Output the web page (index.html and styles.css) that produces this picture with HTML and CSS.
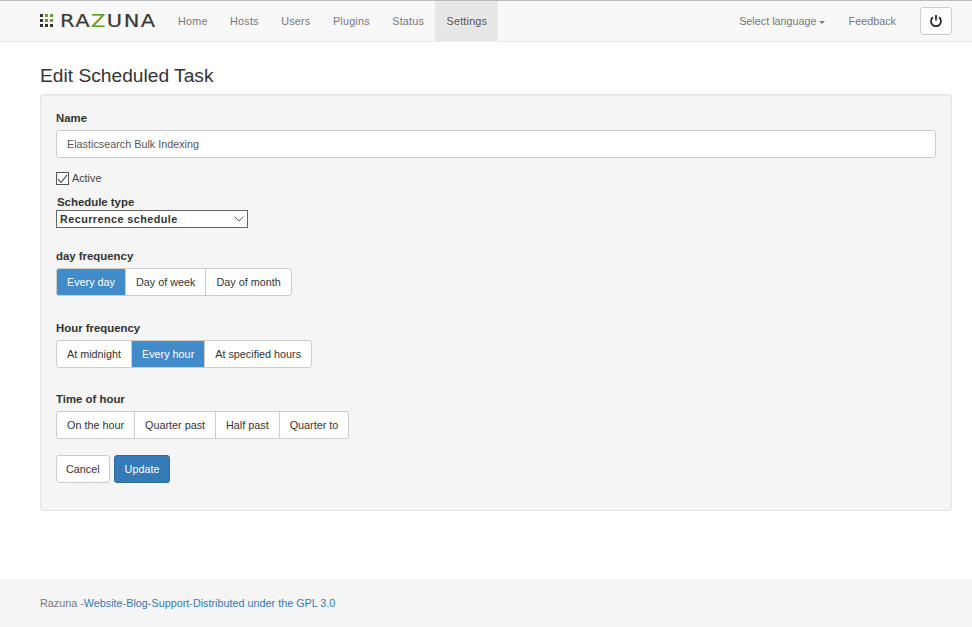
FILE: index.html
```html
<!DOCTYPE html>
<html lang="en">
<head>
    <meta charset="UTF-8">
    <title>Edit Scheduled Task</title>
    <link rel="stylesheet" href="styles.css">
</head>
<body>
    <nav class="navbar">
        <a class="brand" href="#">
            <svg class="brand-mark" width="13" height="14" viewBox="0 0 13 14">
                <g fill="#333">
                    <rect x="0" y="0" width="3" height="3"/><rect x="0" y="5" width="3" height="3"/><rect x="0" y="10" width="3" height="3"/>
                    <rect x="5" y="10" width="3" height="3"/><rect x="10" y="10" width="3" height="3"/>
                </g>
                <g fill="#6a9a2c">
                    <rect x="5" y="0" width="3" height="3"/><rect x="10" y="0" width="3" height="3"/><rect x="5" y="5" width="3" height="3"/><rect x="10" y="5" width="3" height="3"/>
                </g>
            </svg>
            <span class="brand-name">RA<span class="brand-z">Z</span>UNA</span>
        </a>
        <ul class="nav nav-main">
            <li><a href="#">Home</a></li>
            <li><a href="#">Hosts</a></li>
            <li><a href="#">Users</a></li>
            <li><a href="#">Plugins</a></li>
            <li><a href="#">Status</a></li>
            <li class="active"><a href="#">Settings</a></li>
        </ul>
        <ul class="nav nav-right">
            <li><a href="#">Select language<span class="caret"></span></a></li>
            <li><a href="#">Feedback</a></li>
        </ul>
        <button class="power" type="button">
            <svg width="14" height="14" viewBox="0 0 14 14" fill="none" stroke="#222" stroke-width="1.7">
                <path d="M4 3.2a5 5 0 1 0 6 0"/>
                <path d="M7 1v5.5"/>
            </svg>
        </button>
    </nav>

    <main class="container">
        <h1>Edit Scheduled Task</h1>
        <form class="well">
            <label class="field-label" for="taskName">Name</label>
            <input class="form-control" id="taskName" type="text" value="Elasticsearch Bulk Indexing">

            <div class="active-row">
                <span class="check">
                    <svg width="11" height="10" viewBox="0 0 11 10" fill="none" stroke="#333" stroke-width="1.1"><path d="M1 5l3 3.5L10 1"/></svg>
                </span>
                <span>Active</span>
            </div>

            <div class="schedule-label">Schedule type</div>
            <div class="select">
                <span>Recurrence schedule</span>
                <svg width="10" height="6" viewBox="0 0 10 6" fill="none" stroke="#555" stroke-width="1"><path d="M0.5 0.5l4.5 4.5l4.5-4.5"/></svg>
            </div>

            <div class="group-label first">day frequency</div>
            <div class="btn-group">
                <a class="btn on">Every day</a>
                <a class="btn">Day of week</a>
                <a class="btn">Day of month</a>
            </div>

            <div class="group-label">Hour frequency</div>
            <div class="btn-group">
                <a class="btn">At midnight</a>
                <a class="btn on">Every hour</a>
                <a class="btn">At specified hours</a>
            </div>

            <div class="group-label third">Time of hour</div>
            <div class="btn-group">
                <a class="btn">On the hour</a>
                <a class="btn">Quarter past</a>
                <a class="btn">Half past</a>
                <a class="btn">Quarter to</a>
            </div>

            <div class="actions">
                <button class="btn-single" type="button">Cancel</button>
                <button class="btn-single primary" type="button">Update</button>
            </div>
        </form>
    </main>

    <footer class="footer">
        Razuna -<a href="#">Website</a>-<a href="#">Blog</a>-<a href="#">Support</a>-<a href="#">Distributed under the GPL 3.0</a>
    </footer>
</body>
</html>
```

FILE: styles.css
```css
* {
    box-sizing: border-box;
}

body {
    margin: 0;
    font-family: "Liberation Sans", Arial, sans-serif;
    font-size: 10.8px;
    line-height: 15px;
    color: #333;
    background-color: #fff;
}

a {
    color: #337ab7;
    text-decoration: none;
}

.navbar {
    display: flex;
    align-items: center;
    height: 42px;
    padding-left: 40px;
    padding-right: 20px;
    background-color: #f8f8f8;
    border-top: 1px solid #bbb;
    border-bottom: 1px solid #e7e7e7;
}

.brand {
    display: flex;
    align-items: center;
    gap: 7px;
    width: 126.75px;
}

.brand-name {
    font-family: "DejaVu Sans", sans-serif;
    font-size: 17.5px;
    letter-spacing: 1.2px;
    color: #3a3a3a;
    -webkit-text-stroke: 0.2px #3a3a3a;
    transform: scaleX(1.2);
    transform-origin: left center;
}

.brand-z {
    color: #5fa02c;
    -webkit-text-stroke: 0.2px #5fa02c;
}

.nav {
    display: flex;
    margin: 0;
    padding: 0;
    list-style: none;
    height: 100%;
}

.nav a {
    display: block;
    height: 100%;
    padding: 13px 11px;
    color: #777;
}

.nav-main a {
    padding: 13px 11.25px;
    letter-spacing: 0.2px;
}

.nav .active a {
    color: #555;
    background-color: #e7e7e7;
}

.nav-right {
    margin-left: auto;
    margin-right: 13px;
}

.nav-right li + li a {
    padding-left: 13px;
}

.caret {
    display: inline-block;
    margin-left: 2px;
    vertical-align: middle;
    border-top: 3px solid #777;
    border-left: 3px solid transparent;
    border-right: 3px solid transparent;
}

.power {
    display: flex;
    align-items: center;
    justify-content: center;
    width: 32px;
    height: 28px;
    padding: 0;
    background-color: #fff;
    border: 1px solid #ccc;
    border-radius: 3px;
}

.container {
    padding: 0 20px 0 40px;
}

h1 {
    margin: 24px 0 8px;
    font-size: 19.2px;
    font-weight: 400;
    line-height: 20px;
}

.well {
    height: 417px;
    padding: 16px 15px 15px;
    background-color: #f5f5f5;
    border: 1px solid #e3e3e3;
    border-radius: 3px;
    box-shadow: inset 0 1px 1px rgba(0,0,0,.05);
}

.field-label, .schedule-label, .group-label {
    display: block;
    font-weight: 700;
    font-size: 11.4px;
}

.form-control {
    display: block;
    width: 100%;
    height: 28px;
    margin-top: 4px;
    padding: 0 10px;
    font: inherit;
    color: #555;
    background-color: #fff;
    border: 1px solid #ccc;
    border-radius: 3px;
}

.active-row {
    display: flex;
    align-items: center;
    gap: 3px;
    margin-top: 13px;
    color: #444;
}

.check {
    display: flex;
    align-items: center;
    justify-content: center;
    width: 13px;
    height: 13px;
    background-color: #fff;
    border: 1px solid #555;
}

.schedule-label {
    margin-top: 9px;
    padding-left: 1px;
}

.select {
    display: flex;
    align-items: center;
    justify-content: space-between;
    width: 192px;
    height: 18px;
    padding: 0 3px;
    font-weight: 700;
    letter-spacing: 0.45px;
    background-color: #fff;
    border: 1px solid #666;
}

.group-label {
    margin-top: 25px;
    margin-bottom: 4px;
}

.group-label.first {
    margin-top: 21px;
}

.group-label.third {
    margin-top: 24px;
}

.btn-group {
    display: flex;
}

.btn {
    height: 28px;
    padding: 6px 10px;
    color: #333;
    background-color: #fff;
    border: 1px solid #ccc;
    margin-left: -1px;
}

.btn:first-child {
    margin-left: 0;
    border-radius: 3px 0 0 3px;
}

.btn:last-child {
    border-radius: 0 3px 3px 0;
}

.btn.on {
    color: #fff;
    background-color: #428bca;
    border-color: #ccc;
}

.actions {
    display: flex;
    gap: 4px;
    margin-top: 16px;
}

.btn-single {
    height: 28px;
    padding: 0 9px;
    font: inherit;
    color: #333;
    background-color: #fff;
    border: 1px solid #ccc;
    border-radius: 3px;
}

.btn-single.primary {
    padding: 0 10px;
    color: #fff;
    background-color: #337ab7;
    border-color: #2e6da4;
}

.footer {
    margin-top: 68px;
    height: 48px;
    padding: 17px 40px;
    color: #777;
    background-color: #f5f5f5;
}
```
